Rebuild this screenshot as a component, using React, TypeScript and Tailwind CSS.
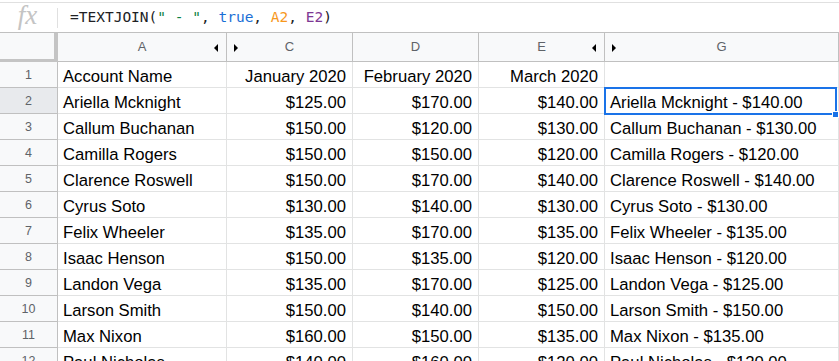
const rows: string[][] = [
  ["Account Name", "January 2020", "February 2020", "March 2020", ""],
  ["Ariella Mcknight", "$125.00", "$170.00", "$140.00", "Ariella Mcknight - $140.00"],
  ["Callum Buchanan", "$150.00", "$120.00", "$130.00", "Callum Buchanan - $130.00"],
  ["Camilla Rogers", "$150.00", "$150.00", "$120.00", "Camilla Rogers - $120.00"],
  ["Clarence Roswell", "$150.00", "$170.00", "$140.00", "Clarence Roswell - $140.00"],
  ["Cyrus Soto", "$130.00", "$140.00", "$130.00", "Cyrus Soto - $130.00"],
  ["Felix Wheeler", "$135.00", "$170.00", "$135.00", "Felix Wheeler - $135.00"],
  ["Isaac Henson", "$150.00", "$135.00", "$120.00", "Isaac Henson - $120.00"],
  ["Landon Vega", "$135.00", "$170.00", "$125.00", "Landon Vega - $125.00"],
  ["Larson Smith", "$150.00", "$140.00", "$150.00", "Larson Smith - $150.00"],
  ["Max Nixon", "$160.00", "$150.00", "$135.00", "Max Nixon - $135.00"],
  ["Paul Nicholas", "$140.00", "$160.00", "$120.00", "Paul Nicholas - $120.00"],
];

const LeftArrow = () => (
  <span className="absolute top-[11px] right-[8px] w-0 h-0 border-y-[4px] border-y-transparent border-r-[4px] border-r-black" />
);
const RightArrow = () => (
  <span className="absolute top-[11px] left-[7px] w-0 h-0 border-y-[4px] border-y-transparent border-l-[4px] border-l-black" />
);

function FormulaBar() {
  return (
    <div className="mt-[2px] h-[31px] border-t border-b border-t-[#e0e0e0] border-b-[#c0c0c0] flex items-center">
      <div className="w-[57px] h-full flex items-center justify-center">
        <span className="text-[27px] italic text-[#c4c4c4] leading-none -mt-[4px] -ml-[2px]" style={{ fontFamily: '"Liberation Serif", serif' }}>
          fx
        </span>
      </div>
      <div className="w-px h-[20px] bg-[#e0e0e0]" />
      <div className="pl-[12px] text-[14.5px] text-[#202124] pt-[1px]" style={{ fontFamily: '"DejaVu Sans Mono", monospace' }}>
        =TEXTJOIN(<span className="text-[#0b8043]">" - "</span>, <span className="text-[#1a6fd6]">true</span>,{" "}
        <span className="text-[#f7981d]">A2</span>, <span className="text-[#7e3794]">E2</span>)
      </div>
    </div>
  );
}

function Header() {
  const head = "h-[29px] border-r border-b border-[#c0c0c0] bg-[#f8f9fa] flex items-center justify-center relative text-[13px] text-[#5f6368]";
  return (
    <div className="flex">
      <div className="w-[58px] h-[29px] bg-[#f8f9fa] border-r-[4px] border-b-[3px] border-[#c4c4c4]" />
      <div className={`w-[169px] ${head}`}>
        A
        <LeftArrow />
      </div>
      <div className={`w-[126px] ${head}`}>
        C
        <RightArrow />
      </div>
      <div className={`w-[126px] ${head}`}>D</div>
      <div className={`w-[126px] ${head}`}>
        E
        <LeftArrow />
      </div>
      <div className={`w-[234px] ${head} bg-[#e8eaed]`}>
        G
        <RightArrow />
      </div>
    </div>
  );
}

export default function App() {
  const cell = "h-[26px] border-r border-b border-[#e2e3e3] flex items-end pb-0 overflow-hidden whitespace-nowrap";
  return (
    <div className="w-[839px] h-[361px] overflow-hidden bg-white relative" style={{ fontFamily: '"Liberation Sans", Arial, sans-serif' }}>
      <FormulaBar />
      <Header />
      <div className="text-[16.67px] text-black leading-[20px]">
        {rows.map((r, i) => (
          <div key={i} className="flex">
            <div
              className={`w-[58px] h-[26px] border-r border-b border-[#c0c0c0] flex items-center justify-center text-[12.5px] text-[#5f6368] ${
                i === 1 ? "bg-[#e8eaed]" : "bg-[#f8f9fa]"
              }`}
            >
              {i + 1}
            </div>
            <div className={`w-[169px] ${cell} pl-[5px]`}>{r[0]}</div>
            <div className={`w-[126px] ${cell} justify-end pr-[6px]`}>{r[1]}</div>
            <div className={`w-[126px] ${cell} justify-end pr-[6px]`}>{r[2]}</div>
            <div className={`w-[126px] ${cell} justify-end pr-[6px]`}>{r[3]}</div>
            <div className={`w-[234px] ${cell} pl-[5px]`}>{r[4]}</div>
          </div>
        ))}
      </div>
      {/* selection */}
      <div className="absolute left-[604px] top-[87px] w-[233px] h-[28px] border-2 border-[#1a73e8] pointer-events-none" />
      <div className="absolute left-[832px] top-[111px] w-[7px] h-[7px] bg-[#1a73e8] border border-white" />
    </div>
  );
}
